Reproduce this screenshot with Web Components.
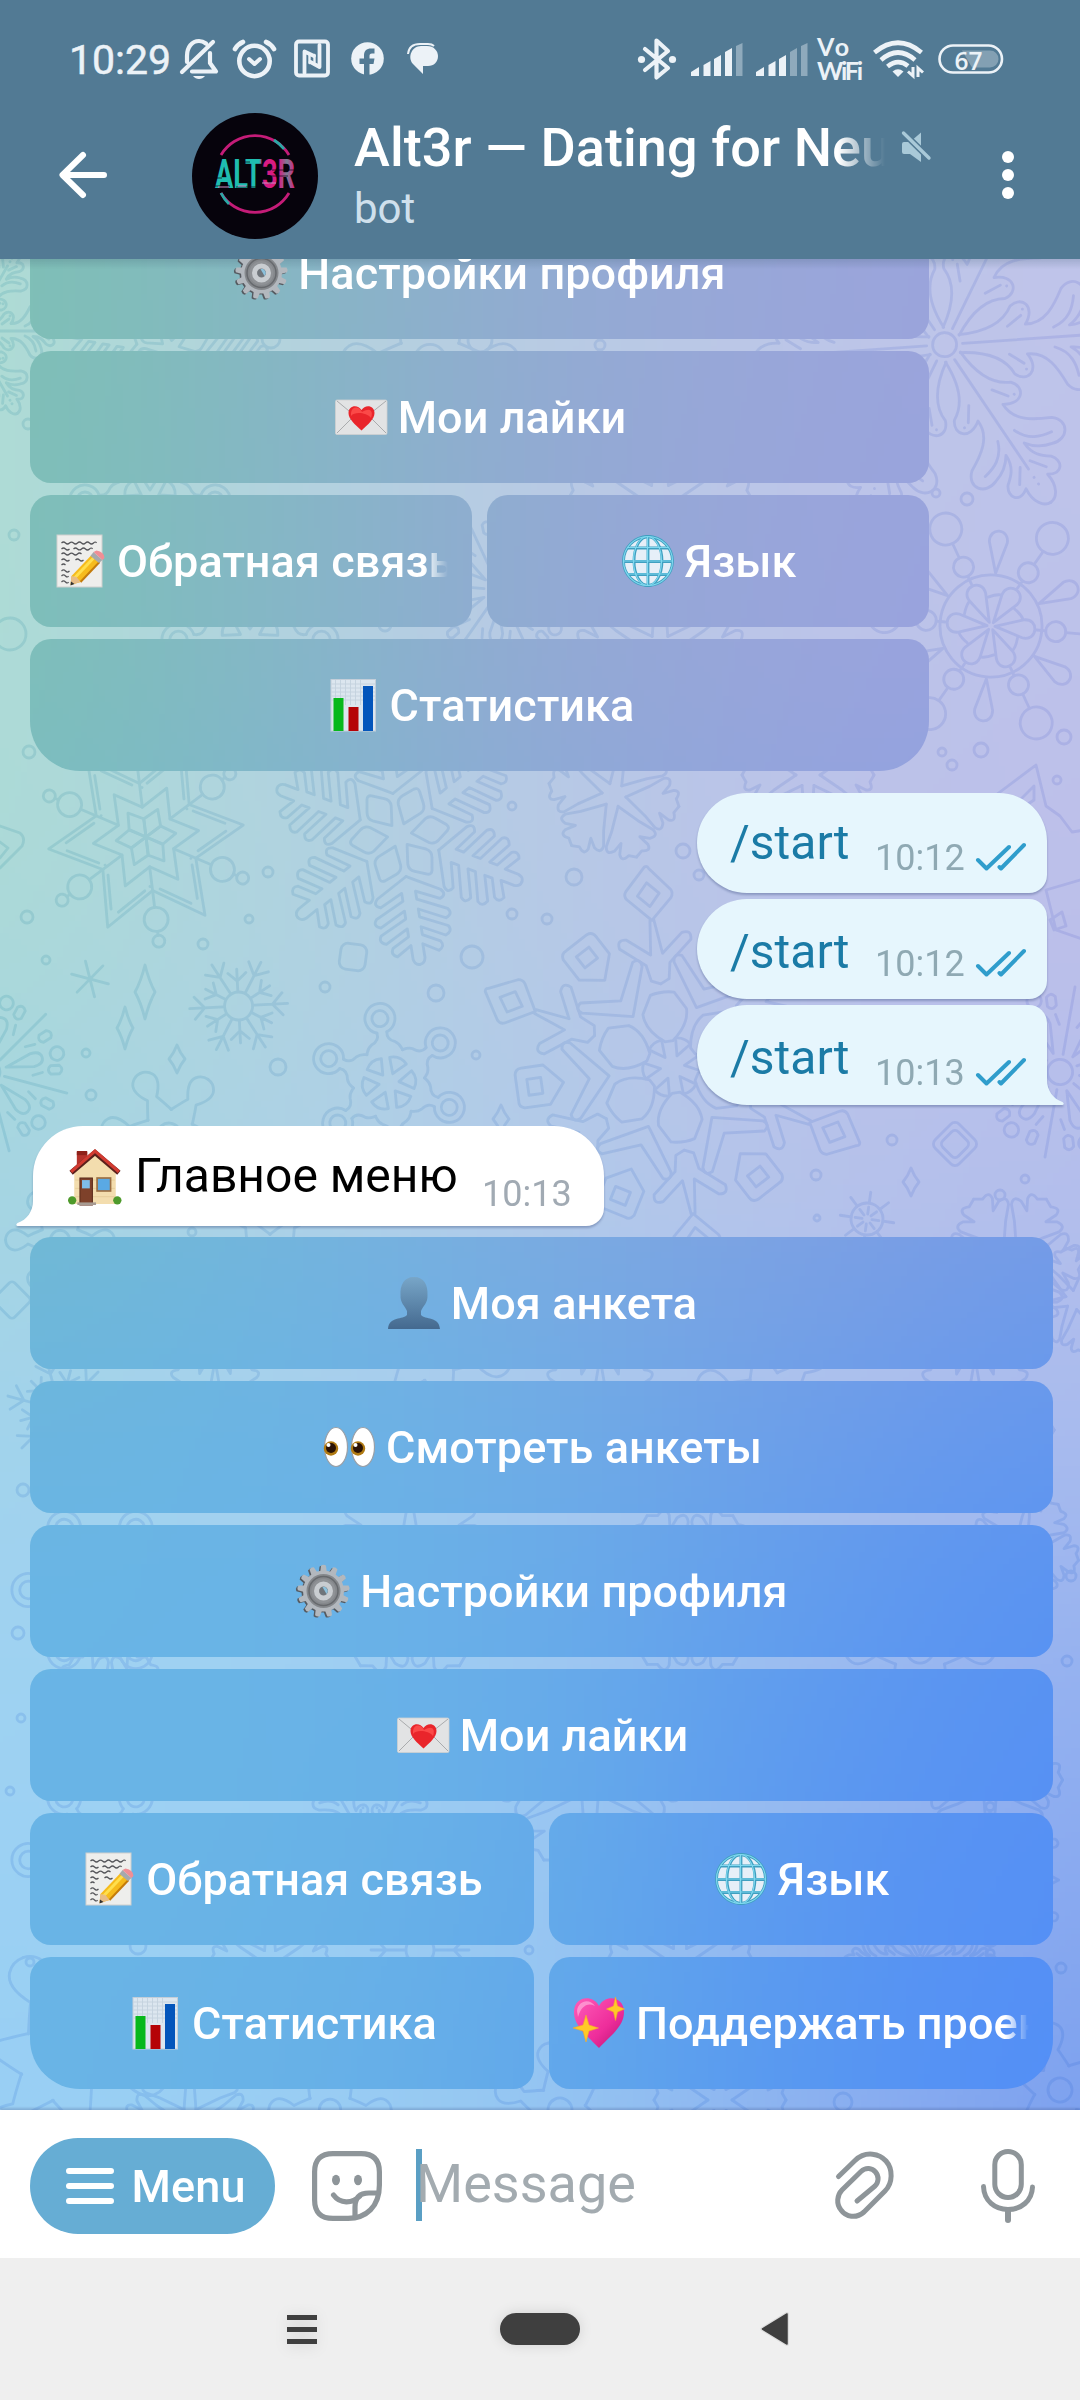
<!DOCTYPE html>
<html lang="ru">
<head>
<meta charset="utf-8">
<title>Alt3r</title>
<style>
html,body{margin:0;padding:0;background:#efefef}
body{width:1080px;height:2400px;overflow:hidden;font-family:Roboto,"Noto Sans",sans-serif}
</style>
</head>
<body>
<phone-screen></phone-screen>
<script>
const mix = (a, b, t) => a.map((v, i) => v + (b[i] - v) * t);
const hex = s => [0, 2, 4].map(i => parseInt(s.substr(i, 2), 16));
const makeField = (xs, ys, rows) => {
  const g = rows.map(r => r.split(' ').map(hex));
  const seg = (arr, v) => {
    let i = 0;
    while (i < arr.length - 2 && v > arr[i + 1]) i++;
    return [i, Math.max(0, Math.min(1, (v - arr[i]) / (arr[i + 1] - arr[i])))];
  };
  const raw = (x, y) => {
    const [i, u] = seg(xs, x), [j, v] = seg(ys, y);
    return mix(mix(g[j][i], g[j][i + 1], u), mix(g[j + 1][i], g[j + 1][i + 1], u), v);
  };
  // average a 5x3 neighbourhood so the grid knots do not show as bands
  return (x, y) => {
    const s = [0, 0, 0];
    for (const dx of [-110, -55, 0, 55, 110]) for (const dy of [-80, 0, 80]) {
      const c = raw(x + dx, y + dy);
      s[0] += c[0]; s[1] += c[1]; s[2] += c[2];
    }
    return s.map(v => v / 15);
  };
};
const wallField = makeField([0, 270, 540, 810, 1080], [260, 600, 900, 1200, 1450, 1700, 2110], [
  'addcd4 b3d3dc b8cce3 bcc6e8 c0c4ea',
  'addcd5 b1d3df b8c9e5 bcc4e9 bdc2ea',
  'abdad7 afd4df b6c9e6 bbc2e9 bdbfea',
  'a4d5e2 acd2e6 b1caea b6c2ea b3beec',
  'a1d3ec a4d1ef a6c9ef a7c0ee a8baee',
  '9ed2f2 9ed1f3 9bc8f2 99bbf0 92aff0',
  '98cff4 9acef3 94c6f2 8bb0f0 7b9fef']);
const keyField = makeField([30, 285, 540, 800, 1050], [270, 700, 1237, 1450, 1600, 1800, 2090], [
  '7ec0b5 86b6c3 92abd2 9aa6da 9aa3dc',
  '7dbfb9 84b7c8 92a9d4 99a4dc 98a2df',
  '70b9d4 72b5de 7aabe1 7da1e3 749be7',
  '6bb5e0 6ab4e5 6eade6 6b9dea 6397ef',
  '69b5e5 69b4e7 69ace9 629ded 5892f2',
  '69b4e6 69b4e6 66ade9 5c98f0 5690f4',
  '69b4e6 68b2e7 62a9ea 5797f1 538ef7']);
const paint = (canvas, field, x0, y0, w, h, step) => {
  const W = canvas.width = Math.ceil(w / step), H = canvas.height = Math.ceil(h / step);
  const ctx = canvas.getContext('2d'), img = ctx.createImageData(W, H);
  for (let y = 0; y < H; y++) for (let x = 0; x < W; x++) {
    const c = field(x0 + (x + .5) * step, y0 + (y + .5) * step), k = (y * W + x) * 4;
    img.data[k] = c[0]; img.data[k + 1] = c[1]; img.data[k + 2] = c[2]; img.data[k + 3] = 255;
  }
  ctx.putImageData(img, 0, 0);
};

/* ---------- winter doodles ---------- */
const at = (x, y, rot, s, sc = 1) => `<g transform="translate(${x} ${y}) rotate(${rot}) scale(${sc})" stroke-width="${2.8 / sc}">${s}</g>`;
const ring = (n, s, off = 0) => Array.from({length: n}, (_, i) => `<g transform="rotate(${off + i * 360 / n})">${s}</g>`).join('');
const P = d => `<path d="${d}"/>`;
const C = (x, y, r) => `<circle cx="${x}" cy="${y}" r="${r}"/>`;
const mirror = s => s + `<g transform="scale(1 -1)">${s}</g>`;

const leafFlake = C(0, 0, 12) + ring(6,
  P('M18 0H150 M160 0h.1 M168 0h.1') +
  mirror(P('M15 -9 C48 -10 62 -22 68 -34 C80 -44 94 -32 82 -15 C102 -14 112 -32 120 -48 C132 -62 148 -50 142 -34 C139 -22 132 -15 126 -11 C140 -11 146 -18 152 -26 C162 -34 174 -26 165 -13 C180 -15 190 -8 190 0') +
    P('M64 -14L78 -24 M80 -30h.1 M110 -10C126 -16 130 -28 132 -40 M144 -6L158 -16')));
const beadFlake = C(0, 0, 51) + ring(6, P('M22 -19Q29 -14 31 -10'), 0) +
  ring(6, P('M4 0 L32 -9 C48 -12 48 12 32 9Z') + P('M46 0H55') + C(65, 0, 10) + P('M75 0H91') + C(107, 0, 16)) +
  ring(6, P('M53 0 L84 -9 C99 -10 99 10 84 9Z'), 30);
const starFlake = (() => {
  const star = (R, r) => { let d = ''; for (let i = 0; i < 12; i++) { const a = i * Math.PI / 6, q = i % 2 ? r : R; d += (i ? 'L' : 'M') + (q * Math.cos(a)).toFixed(1) + ' ' + (q * Math.sin(a)).toFixed(1); } return P(d + 'Z'); };
  return star(98, 54) + star(53, 30) + ring(6, P('M0 0L16 -9L30 0L16 9Z') + P('M80 -4L50 -20 M44 -23h.1 M80 4L50 20')) +
    ring(6, P('M30 0H71') + C(83, 0, 12) + P('M95 0H99') + C(105, 0, 6), 30);
})();
const boneFlake = ring(6, mirror(P('M42 0 L46 7 L60 32 Q66 38 69 30 L58 7 L66 7 L80 36 Q86 41 89 33 L76 7 L84 7 L97 34 Q103 38 106 30 L94 7 L102 7 L111 24 Q117 28 120 21 L111 6 L125 6 Q131 5 131 0'))) +
  ring(6, P('M12 0 L28 -12 Q33 -15 38 -11 L48 -3 Q51 0 48 3 L38 11 Q33 15 28 12Z'), 30);
const chunkFlake = ring(6, mirror(P('M12 0 L34 -15 L46 -25 Q54 -28 53 -19 L48 -10 L58 -15 Q66 -16 62 -7 L66 0')));
const fineFlake = C(0, 0, 14) + ring(6, P('M15 0H49 M34 0L44 -11 M34 0L44 11')) + ring(6, P('M15 0H37 M25 0L33 -9 M25 0L33 9'), 30);
const moleculeFlake = ring(6, C(65, 0, 8) + P('M51 -5 A15 15 0 1 1 51 5') + mirror(P('M51 -5 C46 -4 42 -7 40 -12 C37 -17 33 -17 31 -18'))) +
  ring(6, P('M10 0 L24 -9 Q30 0 24 9Z'), 30);
const grandFlake = ring(6, P('M26 -4 Q40 -22 56 -22 L74 -12 Q77 0 74 12 L56 22 Q40 22 26 4Z') +
    P('M148 0 L172 -22 Q176 -25 180 -22 L202 0 Q203 3 200 4 L176 23 Q172 25 168 22Z M162 0L174 -11L186 0L174 11Z') +
    mirror(P('M84 0 L88 -9 L104 -12 L124 -36 Q134 -38 132 -28 L114 -6 L148 -2'))) +
  ring(6, P('M12 0L28 -8Q32 0 28 8Z') + P('M64 0 L98 -38 Q106 -42 107 -33 L84 0 L107 33 Q106 42 98 38Z') +
    P('M110 0 L126 -20 L152 -20 Q158 -18 157 -12 L157 14 Q156 20 150 20 L128 20Z M132 -8H146V8H132Z'), 30);
const rayFlake = C(0, 0, 14) + ring(6, P('M20 0H96') + P('M52 -10L62 -16 M52 10L62 16')) +
  ring(6, P('M22 0 L54 -8 Q66 -8 66 0 Q66 8 54 8Z') + C(84, 0, 8), 30) +
  ring(12, P('M74 -5H84Q90 0 84 5H74Q68 0 74 -5Z'), 13);
const knobFlake = C(0, 0, 12) + ring(6, mirror(P('M22 -13 Q34 -8 40 -5 Q54 -16 62 -11 Q68 -7 68 0')), 0);
const aster = P('M-19 0H19 M-9 -16L9 16 M9 -16L-9 16');
const sparkle = (x, y, w, h) => P(`M${x} ${y - h}Q${x + w * .4} ${y - h * .4} ${x + w} ${y}Q${x + w * .4} ${y + h * .4} ${x} ${y + h}Q${x - w * .4} ${y + h * .4} ${x - w} ${y}Q${x - w * .4} ${y - h * .4} ${x} ${y - h}Z`);
const dots = [[472,957,11],[436,993,8],[278,1067,8],[325,987,5],[476,1055,4],[268,872,5],[249,919,4],[203,944,5],[27,917,6],[46,960,4],[86,1053,4],[91,1095,5],[512,806,4],[512,914,5],[574,877,8],[683,851,7],[547,919,5],[699,875,5],[892,1140,5],[816,1175,5],[1000,1195,5],[1025,1179,4],[936,493,4],[967,499,6],[1064,737,7],[981,750,7],[942,752,4],[952,765,5],[1057,780,4],[28,424,5],[14,535,5],[10,634,16],[29,752,6],[271,339,9],[600,345,5],[192,1232,4],[23,1490,6],[18,1633,6],[21,1718,4],[10,1791,4],[30,1962,4],[1071,1576,5],[1067,1661,5],[1061,1968,5],[529,1950,4],[843,2102,9],[138,1946,8],[480,340,12],[385,625,6],[817,1218,3]];
const doodles =
  at(944.6, 344.7, -4, leafFlake) + at(-30, 331, 0, leafFlake, .5) + at(991, 626, 5, beadFlake) +
  at(146, 837, -7, starFlake) + at(399.5, 835, 21, boneFlake) + at(614, 795, 10, chunkFlake) +
  at(238.6, 1006, -3, fineFlake) + at(389, 1083, 22, moleculeFlake) + at(672.5, 1067, 22, grandFlake) +
  at(-12, 1072, 15, rayFlake, .85) + at(1060, 1072, 40, rayFlake, .9) + at(169, 1135, 5, knobFlake) +
  at(90, 979, 15, aster) + at(867, 1219, 8, C(0, 0, 16) + ring(8, P('M5 0H12 M16 0H27'))) +
  at(955, 1144, 45, '<rect x="-17" y="-17" width="34" height="34" rx="6"/><rect x="-11" y="-11" width="22" height="22" rx="5"/>') +
  at(353, 957, 8, '<rect x="-13" y="-13" width="26" height="26" rx="7"/>') +
  sparkle(145, 992, 10, 27) + sparkle(125, 1028, 8, 21) + sparkle(177, 1059, 8, 14) + sparkle(501, 1119, 8, 14) + sparkle(911, 1182, 8, 14) +
  at(808, 775, 0, chunkFlake) + at(1010, 1262, 0, chunkFlake, 1.1) +
  P('M996 795L1036 765L1046 806L1060 816L1072 832L1085 830 M1080 880L1046 890L1056 930L1085 940 M1050 920L1062 912L1066 926L1054 930Z M1020 800L1034 786L1034 800L1022 808Z') +
  P('M0 826L20 833Q26 838 22 846L0 868 M0 842L8 848L0 858') +
  at(170, 350, 10, boneFlake, .8) + at(430, 360, 0, knobFlake, 1.3) + at(150, 500, 0, moleculeFlake) + at(500, 590, 5, rayFlake, .8) +
  at(660, 500, 0, chunkFlake, 1.4) + at(250, 640, 0, moleculeFlake, 1.1) + at(660, 650, 0, chunkFlake, 1.3) +
  at(60, 1240, 0, knobFlake, .8) + at(270, 1260, 0, knobFlake) + at(12, 1300, 45, '<rect x="-14" y="-14" width="28" height="28" rx="4"/>') +
  at(60, 1410, 15, fineFlake, 1.1) + at(215, 1420, 0, chunkFlake) + at(430, 1350, 10, knobFlake, 1.2) + at(600, 1430, 0, chunkFlake, 1.2) +
  at(770, 1400, 15, knobFlake, 1.1) + at(975, 1430, 0, chunkFlake, 1.2) + at(1075, 1300, 20, chunkFlake, .8) + at(1020, 1550, 10, chunkFlake, .9) +
  at(100, 1590, 0, moleculeFlake, 1.1) + at(410, 1580, 0, chunkFlake, 1.5) + at(690, 1590, 0, chunkFlake, 1.3) + at(920, 1650, 0, knobFlake, 1.1) +
  at(100, 1860, 0, moleculeFlake, 1.1) + at(110, 1720, 0, chunkFlake, 1.1) + at(370, 1850, 0, leafFlake, .5) + at(590, 1780, 0, chunkFlake, 1.4) +
  at(990, 1780, 0, chunkFlake, 1.1) + at(990, 1880, 0, starFlake, .7) + at(270, 1960, 0, chunkFlake, .9) + at(420, 1950, 0, fineFlake) +
  at(680, 1960, 0, chunkFlake, 1.1) + at(920, 1960, 0, leafFlake, .4) + at(60, 2060, 10, knobFlake, 1.6) + at(330, 2110, 0, knobFlake, .9) +
  at(190, 2120, 0, chunkFlake) + at(720, 2100, 0, chunkFlake) + at(560, 2110, 20, knobFlake) + at(1060, 2090, 20, knobFlake) +
  dots.map(d => C(...d)).join('');

/* ---------- emoji artwork, 52-unit boxes ---------- */
const gearTeeth = Array.from({length: 13}, (_, i) => `<path d="M-3.4 -18L-2.4 -25.5Q0 -27 2.4 -25.5L3.4 -18Z" transform="rotate(${i * 27.69})"/>`).join('');
const emoji = {
  gear: `<g transform="translate(25 27)" fill="#555a60">${gearTeeth}<circle r="20.5"/></g><g transform="translate(26.5 26)" fill="#b3b8be">${gearTeeth}<circle r="20.5"/><circle r="17" fill="#85888c"/><circle r="14.5" fill="none" stroke="#66696d" stroke-width="1.5"/><circle r="12" fill="#8f9296"/><circle r="7" fill="none" stroke="#c9cdd1" stroke-width="5"/><circle r="4.2" fill="#6f757b"/><path d="M-1 -4A4.2 4.2 0 0 1 3 3Z" fill="#8cc1dc"/></g>`,
  letter: `<rect x=".5" y="9" width="51.500" height="34.500" rx="1.500" fill="#e2e3e4" stroke="#cfd0d1" stroke-width=".8"/><path d="M2 10L26 30L51 10M2 42L19 25M51 42L34 25" fill="none" stroke="#a9abad" stroke-width="1"/><path d="M26.500 39.500C20 33.500 13.500 28 13.500 22C13.500 14 23 13 26.500 19C30 13 39.500 14 39.500 22C39.500 28 33 33.500 26.500 39.500Z" fill="#e9252b"/><path d="M16 22C17 15 24 15 27 21C37 15 38 22 36 27C32 22 20 20 16 25Z" fill="#ff5350" opacity=".8"/>`,
  memo: `<g transform="translate(1.500 0)"><rect x="1.500" y="0" width="45" height="52" fill="#eeeeec" stroke="#d0d0ce"/><path d="M6 8q2-2 4 0t4 0t4 0t4 0t4 0t4 0t4 0t4 0t3 0M6 14q2-2 4 0t4 0M18 14q2-2 4 0t4 0t4 0t4 0t3 0M6 19q2-2 4 0t4 0t4 0t4 0t4 0M6 25q2-2 4 0t4 0M20 25q2-2 4 0t4 0M6 30q2-2 4 0M6 36q2-2 4 0t4 0M6 41q2-2 4 0t3 0M6 47q2-2 4 0t3 0" fill="none" stroke="#55565a" stroke-width="1.200"/><path d="M16 41L37 19L45 26L25 47L15 50Z" fill="#f6bb1c"/><path d="M19 43L40 21" stroke="#ffdf4d" stroke-width="3"/><path d="M25 47L44 27" stroke="#c47c0c" stroke-width="2"/><path d="M16 41L15 50L25 47L21 42Z" fill="#e7bc87"/><path d="M15.500 46.500L15 50.500L19 49Z" fill="#333"/><path d="M35 21L38 17L47 25L43.500 28Z" fill="#a6a9ad"/><path d="M38 17L41 15.500Q49 17 49 23L47 25Z" fill="#f08e95"/></g>`,
  globe: `<circle cx="26" cy="26" r="25" fill="#e6eff8"/><g fill="none" stroke="#3f9fc0" stroke-width="2.800"><circle cx="26" cy="26" r="24.500"/><ellipse cx="26" cy="26" rx="14" ry="24.500"/><path d="M26 1V51M1 26.500H51M5 13H47M5 39.500H47"/></g><g fill="none" stroke="#7fd8ef" stroke-width="1.200"><circle cx="26" cy="26" r="24.500"/><ellipse cx="25.500" cy="26" rx="14" ry="24.500"/><path d="M25.500 1V51M1 26H51M5 12.500H47M5 39H47"/></g>`,
  chart: `<g transform="translate(1.500 0)"><rect x="2.500" y=".5" width="44.500" height="51.500" fill="#dce6ef" stroke="#c3ced9"/><path d="M3 5H47M3 9H47M3 13H47M3 17H47M3 21H47M7 1V20M12 1V20M17 1V26M22 1V26M27 1V26M32 1V26" stroke="#c3d1de" stroke-width=".9"/><rect x="5" y="19" width="10" height="33" fill="#07b81b"/><rect x="20" y="28" width="10" height="24" fill="#b50307"/><rect x="34.500" y="7" width="10" height="45" fill="#0355bb"/></g>`,
  bust: `<defs><linearGradient id="b" x2="0" y2="1"><stop offset="0" stop-color="#78a6c8"/><stop offset="1" stop-color="#44698f"/></linearGradient></defs><path d="M26 0C36 0 40 8 39.500 18C40 26 35 29 33 34V38C37 43 51 39 52 52H0C1 39 15 43 19 38V34C17 29 12 26 12.500 18C12 8 16 0 26 0Z" fill="url(#b)"/>`,
  eyes: `<g fill="#fff" stroke="#999fa6" stroke-width="1.200"><ellipse cx="13" cy="26" rx="11.500" ry="19.500"/><ellipse cx="40" cy="26" rx="11.500" ry="19.500"/></g><circle cx="8" cy="27.500" r="7.200" fill="#b07a12"/><circle cx="8" cy="27" r="5" fill="#2a1205"/><circle cx="35" cy="27.500" r="7.200" fill="#b07a12"/><circle cx="35" cy="27" r="5" fill="#2a1205"/><circle cx="5.500" cy="24" r="2" fill="#fff"/><circle cx="32.500" cy="24" r="2" fill="#fff"/>`,
  heart: `<defs><linearGradient id="h" x2="1" y2="1"><stop offset="0" stop-color="#ff5cb8"/><stop offset=".6" stop-color="#ee2d9b"/><stop offset="1" stop-color="#b81272"/></linearGradient></defs><path d="M26 51C16 40 1 30 1 15C1 -1 20 -3 26 9C32 -3 51 -1 51 15C51 30 36 40 26 51Z" fill="url(#h)"/><path d="M4 14C5 3 17 1 22 9C14 5 8 10 5 20Z" fill="#ffa6da" opacity=".75"/><path d="M13 18L16 28L25.500 31L16 34L13 45L10 34L0 31L10 28Z M42.500 0L44.500 9L51.500 12L44.500 15L42.500 23.500L40.500 15L33.500 12L40.500 9Z" fill="#ffc928" stroke="#f9a825" stroke-width=".6"/>`,
  house: `<rect x="8.500" y="1" width="10" height="18" fill="#b5322b"/><rect x="8.500" y="0" width="10" height="4" fill="#8e2119"/><path d="M6 21L26 3L46 21V51H6Z" fill="#f3ddae"/><path d="M7 28H45M7 36H45M7 44H45" stroke="#e2c894" stroke-width=".7"/><path d="M3 21L26 1.500L49 21" fill="none" stroke="#5b211c" stroke-width="5"/><path d="M3 20L26 0L49 20" fill="none" stroke="#d23b31" stroke-width="3"/><rect x="11.500" y="26" width="12" height="26" fill="#7e412a" stroke="#5c2c1b"/><rect x="13.500" y="28" width="7.500" height="8" fill="#7fbde8"/><rect x="28" y="26" width="13" height="12.500" fill="#5aa9e4" stroke="#9c6f43" stroke-width="1.600"/><circle cx="4" cy="47.500" r="4" fill="#4e9a2b"/><circle cx="47.500" cy="47.500" r="4" fill="#4e9a2b"/><rect x="9" y="49.500" width="18" height="2.500" fill="#a79b92"/>`
};

const define = (name, html, init) => customElements.define(name, class extends HTMLElement {
  constructor() { super(); this.attachShadow({mode: 'open'}); }
  connectedCallback() {
    this.shadowRoot.innerHTML = typeof html === 'function' ? html(this) : html;
    if (init) init(this);
  }
});

define('emoji-art', el => `<style>:host{display:block;flex:none;width:52px;height:52px}svg{display:block;width:100%;height:100%;overflow:visible}</style><svg viewBox="0 0 52 52">${emoji[el.getAttribute('name')]}</svg>`);

define('status-bar', `<style>
:host{display:block;height:92px;color:#ecf2f7}
.row{display:flex;align-items:center;height:117px;padding:0 76px 0 69px}
.t{font-size:41px;line-height:48px;width:112px;white-space:nowrap;-webkit-text-stroke:.5px;padding-top:3px}
svg{display:block;flex:none;overflow:visible}
</style><div class="row"><span class="t">10:29</span>
<svg width="38" height="42" viewBox="181 38 38 42" fill="none" stroke="#ecf2f7" stroke-width="4.200" stroke-linecap="round" stroke-linejoin="round"><path d="M188 62V56C188 47 193 41 200 41C203 41 205 42 207 43.500M211 53V63L217 71.500H193M183 72L214 42"/><path d="M194 76H206C203 80 197 80 194 76Z" fill="#ecf2f7" stroke="none"/></svg>
<svg style="margin-left:15px" width="43" height="40" viewBox="234 38 43 40" fill="none" stroke="#ecf2f7" stroke-width="4.600" stroke-linecap="round" stroke-linejoin="round"><circle cx="255.500" cy="60" r="15.200"/><path d="M250 58L255.500 63L261 58" stroke-width="4"/><path d="M236 48Q239 43 244 41M275 48Q272 43 267 41"/></svg>
<svg style="margin-left:18px" width="36" height="38" viewBox="294 40 36 38" fill="none" stroke="#ecf2f7" stroke-width="3.800" stroke-linejoin="round" stroke-linecap="round"><rect x="296" y="41.500" width="32" height="34" rx="3"/><path d="M304.500 73V51.500L314 56" /><path d="M319.500 45V67L310.500 62"/><path d="M309.500 55V63M314.500 55V62" stroke-width="2.400"/></svg>
<svg style="margin-left:21px" width="33" height="33" viewBox="0 0 33 33"><circle cx="16.500" cy="16.500" r="16.300" fill="#ecf2f7"/><path d="M13 34V22H8.500V16.500H13V13.500C13 9 15.500 6.500 20 6.500H23.500V11.500H21C19 11.500 18.500 12.500 18.500 14V16.500H23.500L22.500 22H18.500V34Z" fill="#527a94"/></svg>
<svg style="margin-left:22px" width="32" height="31" viewBox="406 45 32 31"><path d="M408 56Q409 46 420 46H428Q432 46 434 48" fill="none" stroke="#ecf2f7" stroke-width="2"/><path d="M421 48H427C434 48 438 53 438 58C438 64 434 68 428 68H423V76L413 66C407 59 412 48 421 48Z" fill="#ecf2f7"/></svg>
<svg style="margin-left:200px" width="39" height="42" viewBox="638 37 39 42" fill="none" stroke="#ecf2f7" stroke-width="4.200" stroke-linejoin="round" stroke-linecap="round"><path d="M645 48L668 67L656.500 76.500V39.500L668 50L645 69"/><circle cx="641.500" cy="58.500" r="3.600" fill="#ecf2f7" stroke="none"/><circle cx="672.500" cy="58.500" r="3.600" fill="#ecf2f7" stroke="none"/></svg>
<svg style="margin-left:14px" width="52" height="34" viewBox="0 -1 52 34" fill="#ecf2f7"><path d="M0 33V29L8 24V33ZM12.500 33V22L19.500 18V33ZM23 33V16L30 12V33ZM34 33V9L41 5V33Z"/><path d="M45 33V3L51.500 0V33Z" opacity=".4"/></svg>
<svg style="margin-left:13px" width="52" height="34" viewBox="0 -1 52 34" fill="#ecf2f7"><path d="M0 33V29L8 24V33ZM12.500 33V22L19.500 18V33ZM23 33V16L30 12V33Z"/><path d="M34 33V9L41 5V33ZM45 33V3L51.500 0V33Z" opacity=".4"/></svg>
<svg style="margin-left:9px" width="46" height="44" viewBox="0 0 46 44" font-family="Lato,sans-serif" font-weight="700" font-size="25" fill="#ecf2f7"><text x="0" y="19" textLength="32">Vo</text><text x="0" y="42.500" textLength="46">WiFi</text></svg>
<svg style="margin-left:10px" width="50" height="37" viewBox="0 0 50 37" fill="none" stroke="#ecf2f7" stroke-width="4.600"><path d="M1.500 12.500Q25 -7 48.500 12.500M8 20Q25 5 42 20M14.500 26.500Q25 18 35 26"/><path d="M19.500 31.500Q25 27 30.500 31.500L25 37Z" fill="#ecf2f7" stroke="none"/><path d="M40 27V36L35 31.500M45 37V28L50 32.500" stroke-width="3"/></svg>
<svg style="margin-left:15px" width="66" height="30" viewBox="0 0 66 30"><rect x="1.500" y="1.500" width="62.500" height="27" rx="13.500" fill="none" stroke="#ecf2f7" stroke-width="2.600"/><path d="M24 6.500H52A8.500 8.500 0 0 1 52 23.500H34Z" fill="#ecf2f7" opacity=".32"/><text x="16.500" y="26" font-family="Open Sans,sans-serif" font-weight="600" font-size="25.500" textLength="28" lengthAdjust="spacingAndGlyphs" fill="#ecf2f7">67</text></svg>
</div>`);

define('chat-header', `<style>
:host{display:flex;height:167px;align-items:flex-start;color:#fff}
svg{display:block;flex:none;overflow:visible}
.back{margin:60px 0 0 59px}.ava{margin:21px 0 0 85px}
.txt{margin:24px 0 0 36px;width:533px}
.title{font-size:54px;font-weight:500;line-height:64px;letter-spacing:.08px;white-space:nowrap;overflow:hidden;width:533px;-webkit-mask:linear-gradient(90deg,#000 484px,transparent 531px);mask:linear-gradient(90deg,#000 484px,transparent 531px)}
.sub{font-size:42px;line-height:50px;color:#cfe0ec;margin-top:4px;padding-left:0}
.mute{margin:39px 0 0 15px}.more{margin:59px 0 0 71px}
</style>
<svg class="back" width="48" height="46" viewBox="0 0 48 46" fill="none" stroke="#fff" stroke-width="6" stroke-linecap="round" stroke-linejoin="round"><path d="M45 23H4M24 3L3.500 23L24 43"/></svg>
<svg class="ava" width="126" height="126" viewBox="192 113 126 126"><defs><linearGradient id="g" x1="0" x2="1"><stop offset="0" stop-color="#1fbdb0"/><stop offset=".55" stop-color="#1fbdb0"/><stop offset=".6" stop-color="#d81b82"/><stop offset=".8" stop-color="#d81b82"/><stop offset=".9" stop-color="#7a7f95"/><stop offset="1" stop-color="#d81b82"/></linearGradient></defs><circle cx="255" cy="176" r="63" fill="#06030c"/><g fill="none" stroke-width="2.800"><path d="M221 155A39.500 39.500 0 0 1 289 155M221 193A39.500 39.500 0 0 0 289 193" stroke="#c41c78"/><path d="M274 140A40 40 0 0 1 284 149M221 193A40 40 0 0 0 229 204" stroke="#2aa9a6"/></g><text x="215" y="188" font-family="Roboto" font-weight="700" font-size="40" textLength="80" lengthAdjust="spacingAndGlyphs" fill="url(#g)">ALT3R</text><path d="M214 186H230M236 187H262M208 178H222M244 162H250M272 170H296M266 176H288" stroke="#06030c" stroke-width="1" opacity=".7"/><path d="M218 187H229M238 186H246M262 183H276" stroke="#c98bc0" stroke-width="1.500" opacity=".7"/></svg>
<div class="txt"><div class="title">Alt3r — Dating for Neurodivergent</div><div class="sub">bot</div></div>
<svg class="mute" width="29" height="32" viewBox="0 0 29 32"><path d="M2 11H8L19 1.500V31L8 23H2Q0 23 0 21V13Q0 11 2 11Z" fill="#a9c9d8"/><path d="M-1 -.5L29.500 29.500" stroke="#527a94" stroke-width="6.500"/><path d="M1.500 2L27 27" stroke="#a9c9d8" stroke-width="3.400" stroke-linecap="round"/></svg>
<svg class="more" width="13" height="48" viewBox="0 0 13 48" fill="#fff"><circle cx="6" cy="6" r="6"/><circle cx="6" cy="24" r="6"/><circle cx="6" cy="42" r="6"/></svg>`);

define('chat-wallpaper', `<style>:host{display:grid;width:1080px;height:1851px;overflow:hidden}canvas,svg{grid-area:1/1;display:block;width:1080px;height:1851px}</style><canvas></canvas><svg viewBox="0 259 1080 1851"><defs>
<linearGradient id="ink" gradientUnits="userSpaceOnUse" x1="0" y1="700" x2="1080" y2="700"><stop offset="0" stop-color="#1a8498"/><stop offset=".45" stop-color="#3a70bc"/><stop offset="1" stop-color="#4a5acb"/></linearGradient>
<linearGradient id="deep" gradientUnits="userSpaceOnUse" x1="0" y1="1000" x2="0" y2="1600"><stop offset="0" stop-color="#1a66d0" stop-opacity="0"/><stop offset="1" stop-color="#1c5ed2"/></linearGradient>
<mask id="m" maskUnits="userSpaceOnUse" x="0" y="259" width="1080" height="1851"><g fill="none" stroke="#fff" stroke-width="2.800" stroke-linecap="round" stroke-linejoin="round">${doodles}</g></mask></defs>
<g mask="url(#m)" opacity=".15"><rect y="259" width="1080" height="1851" fill="url(#ink)"/><rect y="259" width="1080" height="1851" fill="url(#deep)"/></g></svg>`,
  el => paint(el.shadowRoot.querySelector('canvas'), wallField, 0, 259, 1080, 1851, 6));

define('key-button', el => `<style>
:host{display:grid;flex:1 1 0;min-width:0;height:132px;border-radius:21px;overflow:hidden;position:relative;color:#fff;font-weight:500;font-size:45px;line-height:54px}
:host([bl]){border-bottom-left-radius:50px}:host([br]){border-bottom-right-radius:50px}
canvas{grid-area:1/1;display:block;width:100%;height:132px}
.c{grid-area:1/1;z-index:1;display:flex;align-items:center;justify-content:center;gap:11px;margin:0 24px;padding-left:2px;overflow:hidden;white-space:nowrap;min-width:0;letter-spacing:.07px}
.c span{padding-top:2px}
:host([cut]) .c{padding-left:0;justify-content:flex-start;-webkit-mask:linear-gradient(90deg,#000 calc(100% - 24px),transparent);mask:linear-gradient(90deg,#000 calc(100% - 24px),transparent)}
</style><canvas></canvas><div class="c"><emoji-art name="${el.getAttribute('icon')}"></emoji-art><span><slot></slot></span></div>`);

define('inline-keyboard', `<style>:host{display:flex;flex-direction:column;gap:12px;margin-left:30px}</style><slot></slot>`);
define('key-row', `<style>:host{display:flex;gap:15px}</style><slot></slot>`);

define('message-bubble', el => {
  const out = el.hasAttribute('out'), tail = el.hasAttribute('tail');
  return `<style>
:host{display:flex;align-items:flex-start;box-sizing:border-box;height:100px;position:relative;filter:drop-shadow(0 2px 1px rgba(60,80,130,.38))}
:host([out]){width:350px;margin-left:697px;padding-left:33px;background:#e6f6fd;border-radius:50px 18px 18px 50px}
:host([out][first]){border-top-right-radius:48px}
:host([out][tail]){border-bottom-right-radius:0}
:host([in]){width:571px;margin-left:33px;padding-left:35px;background:#fff;border-radius:50px 50px 18px 0}
.m{font-size:48px;line-height:56px;margin-top:${el.getAttribute('m')}px;white-space:nowrap;flex:none;color:${out ? '#1b7ba6' : '#000'};width:${out ? '145px' : '347px'}}
.t{font-size:36px;line-height:42px;margin-top:${el.getAttribute('t')}px;flex:none;color:${out ? '#8fa9b3' : '#a1aab3'};width:${out ? 100.5 : 90}px}
emoji-art{width:54px;height:54px;margin:25px 13px 0 0}
.ck{margin-top:${+el.getAttribute('t') + 5}px}
svg{display:block;flex:none;overflow:visible}
.tail{position:absolute;top:75px;${out ? 'right:-17px' : 'left:-17px;transform:scaleX(-1)'}}
</style>${out ? '' : '<emoji-art name="house"></emoji-art>'}<span class="m"><slot></slot></span><span class="t">${el.getAttribute('time')}</span>
${out ? '<svg class="ck" width="50" height="30" viewBox="0 0 50 30" fill="none" stroke="#2f9dcc" stroke-width="4" stroke-linecap="round" stroke-linejoin="round"><path d="M2 18L10.500 26.500L33 5M23.500 25L25 26.500L48 3"/></svg>' : ''}
${tail ? `<svg class="tail" width="19" height="25" viewBox="0 0 19 25"><path d="M0 0H2C2 10 8 19 17.500 22Q20 24 17.500 25H0Z" fill="${out ? '#e6f6fd' : '#fff'}"/></svg>` : ''}`;
});

define('chat-thread', `<style>
:host{display:grid;width:1080px;height:1851px;overflow:hidden;position:relative}
chat-wallpaper,.list,.sh{grid-area:1/1}
.list{display:flex;flex-direction:column;position:relative;margin-top:-52px}
.sh{height:10px;background:linear-gradient(rgba(60,90,110,.22),transparent);position:relative}
.w1{width:899px}.w2{width:1023px}
</style><chat-wallpaper></chat-wallpaper>
<div class="list">
<inline-keyboard class="w1">
<key-row><key-button icon="gear">Настройки профиля</key-button></key-row>
<key-row><key-button icon="letter">Мои лайки</key-button></key-row>
<key-row><key-button icon="memo" cut>Обратная связь</key-button><key-button icon="globe">Язык</key-button></key-row>
<key-row><key-button icon="chart" bl br>Статистика</key-button></key-row>
</inline-keyboard>
<message-bubble out first m="22" t="44" time="10:12" style="margin-top:22px">/start</message-bubble>
<message-bubble out m="25" t="44" time="10:12" style="margin-top:6px">/start</message-bubble>
<message-bubble out tail m="25" t="47" time="10:13" style="margin-top:6px">/start</message-bubble>
<message-bubble in tail m="22" t="47" time="10:13" style="margin-top:21px">Главное меню</message-bubble>
<inline-keyboard class="w2" style="margin-top:11px">
<key-row><key-button icon="bust">Моя анкета</key-button></key-row>
<key-row><key-button icon="eyes">Смотреть анкеты</key-button></key-row>
<key-row><key-button icon="gear">Настройки профиля</key-button></key-row>
<key-row><key-button icon="letter">Мои лайки</key-button></key-row>
<key-row><key-button icon="memo">Обратная связь</key-button><key-button icon="globe">Язык</key-button></key-row>
<key-row><key-button icon="chart" bl>Статистика</key-button><key-button icon="heart" cut br>Поддержать проект</key-button></key-row>
</inline-keyboard>
</div><div class="sh"></div>`);

define('message-input', `<style>
:host{display:flex;align-items:flex-start;height:148px;background:#fff;box-shadow:0 -2px 2px rgba(60,80,130,.25);position:relative}
svg{display:block;flex:none;overflow:visible}
.menu{display:flex;align-items:center;box-sizing:border-box;width:245px;height:96px;border-radius:48px;margin:28px 0 0 30px;padding-left:36px;gap:17.500px;background:#66add4;color:#fff;font-size:45px;font-weight:500}
.menu span{letter-spacing:.15px}
.st{margin:41px 0 0 37px}
.cur{width:6px;height:72px;margin:39px 0 0 34px;background:#5a9fc4}
.ph{font-size:54px;line-height:64px;color:#a3abb0;margin:42px 0 0 -6px;width:419px}
.at{margin:42px 0 0 0}.mic{margin:39px 0 0 87px}
</style>
<div class="menu"><svg width="48" height="36" viewBox="0 0 48 36" stroke="#fff" stroke-width="6" stroke-linecap="round"><path d="M3 3H45M3 18H45M3 33H45"/></svg><span>Menu</span></div>
<svg class="st" width="70" height="70" viewBox="0 0 70 70" fill="none" stroke="#8e9599" stroke-width="5.200" stroke-linecap="round" stroke-linejoin="round"><path d="M21 2.600H49Q67.400 2.600 67.400 21V34C67.400 56 54 67.400 36 67.400H21Q2.600 67.400 2.600 49V21Q2.600 2.600 21 2.600Z"/><path d="M43 66V56Q43 42 57 42H65M21.500 44C28 53 40 53 48 45"/><ellipse cx="24" cy="29" rx="4" ry="5.200" fill="#8e9599" stroke="none"/><ellipse cx="46" cy="29" rx="4" ry="5.200" fill="#8e9599" stroke="none"/></svg>
<div class="cur"></div><div class="ph">Message</div>
<svg class="at" width="59" height="68" viewBox="835 2152 59 68" fill="none" stroke="#8e9599" stroke-width="5" stroke-linecap="round" stroke-linejoin="round"><path d="M838.500 2176.500L855 2160.500C866 2150 880 2154 886 2161C893 2169 893 2183 885 2191L864 2212C856 2219 846 2217 841 2210C836 2204 837 2195 842 2190L861 2171.500C866 2167 872 2168 875.500 2172C879 2176 879 2182 875 2186L857 2201"/></svg>
<svg class="mic" width="54" height="74" viewBox="0 0 54 74" fill="none" stroke="#8e9599" stroke-width="5" stroke-linecap="round"><rect x="13.800" y="2.500" width="26.500" height="46" rx="13.200"/><path d="M2.500 37.500C3 52 14 60.500 27 60.500C40 60.500 51 52 51.500 38"/><path d="M27 62V71" stroke-width="6"/></svg>`);

define('nav-bar', `<style>
:host{display:flex;align-items:center;box-sizing:border-box;height:142px;background:#efefef;padding:0 0 0 287px}
svg{display:block;overflow:visible}
.r{filter:drop-shadow(0 2px 7px rgba(0,0,0,.12))}
.h{width:80px;height:32px;border-radius:16px;background:#3f3f3f;margin-left:183px;box-shadow:0 0 14px rgba(0,0,0,.12)}
.b{margin-left:181px}
</style><svg class="r" width="30" height="29" viewBox="0 0 30 29" fill="#3f3f3f"><path d="M0 0H30V5H0ZM0 12H30V17H0ZM0 24H30V29H0Z"/></svg><div class="h"></div><svg class="b" width="27" height="34" viewBox="0 0 27 34"><path d="M1.500 17L26 2V32Z" fill="#3f3f3f" stroke="#dcdcdc" stroke-width="4" stroke-linejoin="round"/><path d="M1.500 17L26 2V32Z" fill="#3f3f3f" stroke="#3f3f3f" stroke-width="1.500" stroke-linejoin="round"/></svg>`);

define('phone-screen', `<style>
:host{display:flex;flex-direction:column;width:1080px;height:2400px;overflow:hidden;font-family:Roboto,"Noto Sans",sans-serif}
.top{background:#527a94;height:259px}
</style><div class="top"><status-bar></status-bar><chat-header></chat-header></div><chat-thread></chat-thread><message-input></message-input><nav-bar></nav-bar>`);

const thread = document.querySelector('phone-screen').shadowRoot.querySelector('chat-thread');
thread.shadowRoot.querySelectorAll('key-button').forEach(k => {
  const r = k.getBoundingClientRect();
  paint(k.shadowRoot.querySelector('canvas'), keyField, r.left, r.top, r.width, r.height, 6);
});
</script>
</body>
</html>
